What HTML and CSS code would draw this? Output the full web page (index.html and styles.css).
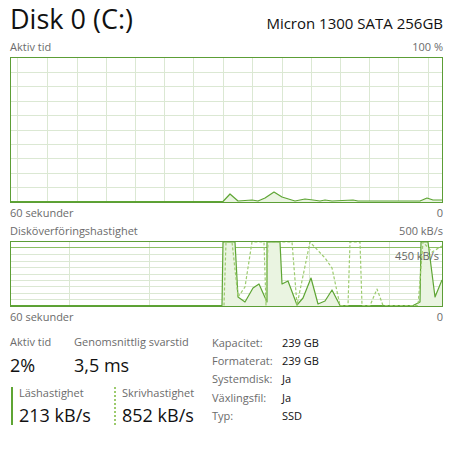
FILE: index.html
```html
<!DOCTYPE html>
<html lang="sv">
<head>
<meta charset="utf-8">
<title>Disk 0 (C:)</title>
<link rel="stylesheet" href="styles.css">
</head>
<body>
<div class="page">
  <header class="head">
    <h1 class="title">Disk 0 (C:)</h1>
    <div class="model">Micron 1300 SATA 256GB</div>
  </header>

  <div class="axis axis-top"><span>Aktiv tid</span><span>100 %</span></div>
  <div class="chart chart-active">
    <svg class="plot" width="431" height="144" viewBox="11 58 431 144" preserveAspectRatio="none">
      <g class="grid">
        <path d="M11 72.5H442M11 86.5H442M11 101.5H442M11 115.5H442M11 130.5H442M11 144.5H442M11 158.5H442M11 173.5H442M11 187.5H442"/>
        <path d="M17.5 58V202M47.5 58V202M77.5 58V202M106.5 58V202M135.5 58V202M164.5 58V202M193.5 58V202M223.5 58V202M252.5 58V202M282.5 58V202M311.5 58V202M340.5 58V202M369.5 58V202M398.5 58V202M428.5 58V202"/>
      </g>
      <polygon class="area" points="11,202 11,201.5 223,201.5 230,194 238,201 252,200 258,201 265,198 274,192 282,197 295,201 305,199 313,200 320,201 325,200 332,201 353,200 358,201 420,201 427,198 433,200 442,200 442,202"/>
      <polyline class="line" points="11,201.5 223,201.5 230,194 238,201 252,200 258,201 265,198 274,192 282,197 295,201 305,199 313,200 320,201 325,200 332,201 353,200 358,201 420,201 427,198 433,200 442,200"/>
    </svg>
  </div>
  <div class="axis"><span>60 sekunder</span><span>0</span></div>

  <div class="axis axis-mid"><span>Disköverföringshastighet</span><span>500 kB/s</span></div>
  <div class="chart chart-transfer">
    <svg class="plot" width="431" height="64" viewBox="11 242 431 64" preserveAspectRatio="none">
      <g class="grid">
        <path d="M11 254.5H442M11 261.5H442M11 267.5H442M11 274.5H442M11 280.5H442M11 286.5H442M11 293.5H442M11 299.5H442"/>
        <path d="M69.5 242V306M149.5 242V306M229.5 242V306M309.5 242V306M389.5 242V306"/>
      </g>
      <path class="scale-line" d="M11 247.5H442"/>
      <polygon class="area" points="11,306 222,306 223,242 235,242 238,297 245,302 253,288 259,284 267,302 267,242 280,242 282,284 288,281 297,305 303,298 311,278 318,304 325,301 332,290 340,306 413,306 420,302 421,242 428,242 435,297 442,280 442,306"/>
      <polyline class="line" points="11,305.5 222,305.5 223,242 235,242 238,297 245,302 253,288 259,284 267,302 267,242 280,242 282,284 288,281 297,305 303,298 311,278 318,304 325,301 332,290 340,305.5 413,305.5 420,302 421,242 428,242 435,297 442,280"/>
      <polyline class="line dashed" points="224,305.5 226,242 232,242 238,297 245,287 252,242 264,242 266,305 268,242 292,242 297,305 310,242 325,258 332,268 340,305.5 348,305.5 350,242 360,242 362,305.5 370,305.5 377,289 383,305.5 418,305.5 423,242 432,252 442,246"/>
    </svg>
    <span class="scale">450 kB/s</span>
  </div>
  <div class="axis"><span>60 sekunder</span><span>0</span></div>

  <section class="stats">
    <div class="live">
      <div class="row">
        <div class="stat stat-first"><div class="lbl">Aktiv tid</div><div class="val">2%</div></div>
        <div class="stat"><div class="lbl">Genomsnittlig svarstid</div><div class="val">3,5 ms</div></div>
      </div>
      <div class="row rates">
        <div class="stat rate read"><div class="lbl">Läshastighet</div><div class="val">213 kB/s</div></div>
        <div class="stat rate write"><div class="lbl">Skrivhastighet</div><div class="val">852 kB/s</div></div>
      </div>
    </div>
    <dl class="info">
      <dt>Kapacitet:</dt><dd>239 GB</dd>
      <dt>Formaterat:</dt><dd>239 GB</dd>
      <dt>Systemdisk:</dt><dd>Ja</dd>
      <dt>Växlingsfil:</dt><dd>Ja</dd>
      <dt>Typ:</dt><dd>SSD</dd>
    </dl>
  </section>
</div>
</body>
</html>
```

FILE: styles.css
```css
* { box-sizing: border-box; }

html, body {
  margin: 0;
  padding: 0;
  background: #ffffff;
}

body {
  font-family: "Open Sans", "Noto Sans", sans-serif;
  color: #000;
}

.page {
  width: 451px;
  height: 453px;
  padding: 0 8px 0 10px;
}

.head {
  display: flex;
  justify-content: space-between;
  align-items: baseline;
  height: 37px;
}

.title {
  margin: 0;
  font-size: 27px;
  font-weight: 400;
  line-height: 37px;
  color: #111;
}

.model {
  font-size: 15px;
  line-height: 20px;
  color: #111;
}

.axis {
  display: flex;
  justify-content: space-between;
  font-size: 11px;
  line-height: 20px;
  height: 20px;
  color: #6b6b6b;
}

.axis-top { height: 20px; }

.axis-mid {
  height: 18px;
  line-height: 16px;
}

.chart {
  position: relative;
  border: 1px solid #5c9e36;
  background: #fff;
}

.chart-active { height: 146px; }
.chart-transfer { height: 66px; }

.plot {
  display: block;
}

.grid path {
  stroke: #dbe8d3;
  stroke-width: 1;
  fill: none;
}

.scale-line {
  stroke: #8cc063;
  stroke-width: 1;
}

.area {
  fill: #eaf4e1;
  stroke: none;
}

.line {
  fill: none;
  stroke: #5ea534;
  stroke-width: 1.2;
  stroke-linejoin: round;
}

.dashed {
  stroke: #9ccb6d;
  stroke-dasharray: 3 2;
}

.scale {
  position: absolute;
  top: 6px;
  right: 3px;
  font-size: 11px;
  line-height: 16px;
  color: #666;
}

.stats {
  display: flex;
  padding-top: 7px;
}

.live {
  width: 202px;
}

.row {
  display: flex;
}

.stat-first { width: 64px; }

.lbl {
  font-size: 11px;
  line-height: 16px;
  color: #6b6b6b;
  white-space: nowrap;
}

.val {
  font-size: 18px;
  line-height: 24px;
  margin-top: 3px;
  color: #111;
  white-space: nowrap;
}

.rates {
  margin-top: 10px;
}

.rate {
  padding-left: 6px;
}

.rate .lbl { line-height: 12px; }
.rate .val { line-height: 20px; margin-top: 6px; }

.read {
  width: 103px;
  border-left: 2px solid #5ea534;
  margin-left: 1px;
}

.write {
  border-left: 2px dotted #9ccb6d;
}

.info {
  margin: 0;
  display: grid;
  grid-template-columns: 70px auto;
  font-size: 11px;
  line-height: 18.2px;
}

.info dt {
  color: #6b6b6b;
}

.info dd {
  margin: 0;
  color: #111;
}
```
